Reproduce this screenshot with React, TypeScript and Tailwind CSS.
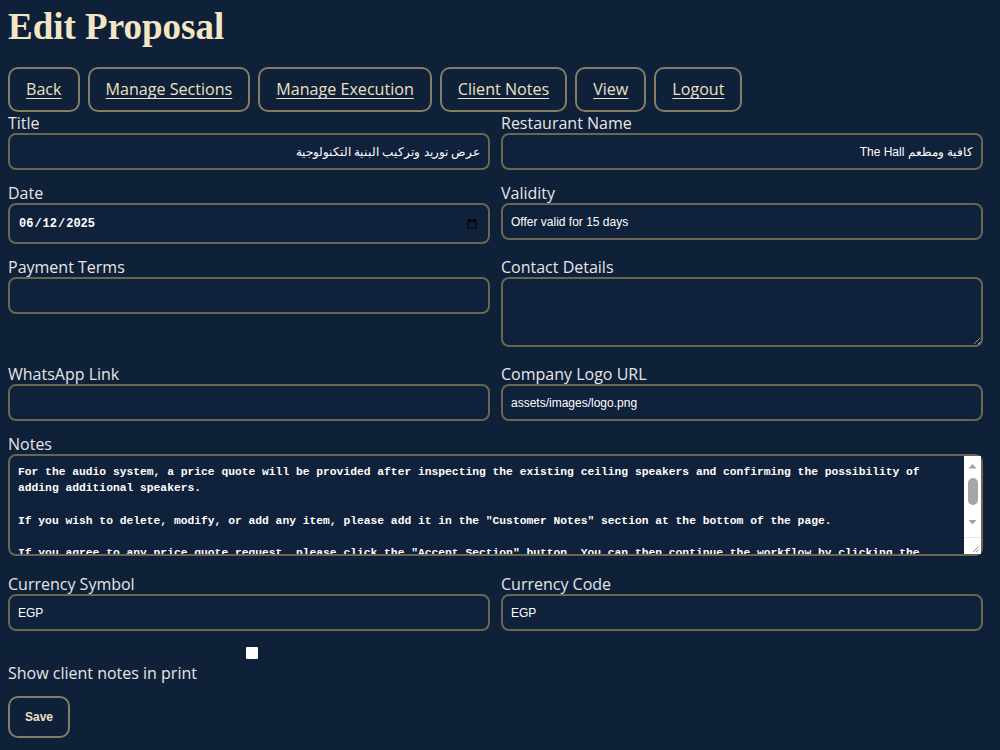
import { useState } from "react";

const NOTES = `For the audio system, a price quote will be provided after inspecting the existing ceiling speakers and confirming the possibility of adding additional speakers.

If you wish to delete, modify, or add any item, please add it in the "Customer Notes" section at the bottom of the page.

If you agree to any price quote request, please click the "Accept Section" button. You can then continue the workflow by clicking the "Manage Execution" button to follow up on delivery and installation.

For any questions, please contact us on WhatsApp.`;

const navLinks = ["Back", "Manage Sections", "Manage Execution", "Client Notes", "View", "Logout"];

const labelCls = "block h-5 text-[16px] leading-5 text-[#e6e6e6] [font-family:'Open_Sans',sans-serif]";
const boxCls =
  "block w-full rounded-[8px] border-2 border-[#6b6653] bg-[#10213b] px-[8px] text-white outline-none";
const sansText = "text-[12px] [font-family:'Liberation_Sans',Arial,sans-serif]";

function Field({
  label,
  value,
  dir,
  type = "text",
}: {
  label: string;
  value: string;
  dir?: "rtl" | "ltr";
  type?: string;
}) {
  const [v, setV] = useState(value);
  const isDate = type === "date";
  return (
    <div className="mb-[13px]">
      <label className={labelCls}>{label}</label>
      <input
        type={type}
        dir={dir}
        value={v}
        onChange={(e) => setV(e.target.value)}
        className={
          isDate
            ? `${boxCls} h-[41px] text-[12px] font-bold [color-scheme:light] [font-family:'Liberation_Mono',monospace]`
            : `${boxCls} h-[37px] ${sansText}`
        }
      />
    </div>
  );
}

// light scroll bar drawn beside the notes text
function ScrollBar() {
  return (
    <div className="pointer-events-none absolute bottom-[2px] right-[2px] top-[2px] flex w-[17px] flex-col bg-white">
      <svg width="17" height="18" viewBox="0 0 17 18">
        <path d="M4.5 12.5 L8.5 8 L12.5 12.5 Z" fill="#a0a0a0" />
      </svg>
      <div className="mx-auto mt-[4px] h-[27px] w-[10px] rounded-full bg-[#a6a6a6]" />
      <svg className="mt-[9px]" width="17" height="18" viewBox="0 0 17 18">
        <path d="M4.5 6 L8.5 10.5 L12.5 6 Z" fill="#a0a0a0" />
      </svg>
      <div className="flex-1" />
      <svg className="border-t border-[#e4e4e4]" width="17" height="17" viewBox="0 0 17 17">
        <line x1="9" y1="15" x2="15" y2="9" stroke="#8a8a8a" />
        <line x1="12" y1="15" x2="15" y2="12" stroke="#8a8a8a" />
      </svg>
    </div>
  );
}

export default function App() {
  const [showNotes, setShowNotes] = useState(false);
  const [notes, setNotes] = useState(NOTES);
  const [contact, setContact] = useState("");

  return (
    <div className="min-h-[750px] bg-[#0f2039] pl-[8px] pr-[17px] pt-[4px]">
      <h1 className="text-[37px] leading-[46px] font-bold text-[#f3e6c4] [font-family:'Liberation_Serif','DejaVu_Serif',serif]">
        Edit Proposal
      </h1>

      {/* top navigation */}
      <div className="mt-[17px] flex gap-[8px]">
        {navLinks.map((l) => (
          <a
            key={l}
            href="#"
            className="flex h-[45px] items-center rounded-[10px] border-2 border-[#857c63] px-[16px] text-[16.1px] text-[#ece0c2] underline underline-offset-[3px] [font-family:'Open_Sans',sans-serif]"
          >
            {l}
          </a>
        ))}
      </div>

      <form className="mt-[1px] grid grid-cols-2 gap-x-[11px]" onSubmit={(e) => e.preventDefault()}>
        <Field label="Title" value="عرض توريد وتركيب البنية التكنولوجية" dir="rtl" />
        <Field label="Restaurant Name" value="كافية ومطعم The Hall" dir="rtl" />
        <Field label="Date" value="2025-06-12" type="date" />
        <Field label="Validity" value="Offer valid for 15 days" />
        <Field label="Payment Terms" value="" />
        <div className="mb-[17px]">
          <label className={labelCls}>Contact Details</label>
          <textarea
            value={contact}
            onChange={(e) => setContact(e.target.value)}
            className={`${boxCls} h-[70px] ${sansText}`}
          />
        </div>
        <Field label="WhatsApp Link" value="" />
        <Field label="Company Logo URL" value="assets/images/logo.png" />

        <div className="col-span-2 mb-[18px]">
          <label className={labelCls}>Notes</label>
          <div className="relative">
            <textarea
              value={notes}
              onChange={(e) => setNotes(e.target.value)}
              className={`${boxCls} h-[102px] resize-none overflow-hidden pr-[25px] pt-[8px] text-[11.3px] leading-[16.3px] font-bold [font-family:'Liberation_Mono',monospace]`}
            />
            <ScrollBar />
          </div>
        </div>

        <Field label="Currency Symbol" value="EGP" />
        <Field label="Currency Code" value="EGP" />

        <div className="col-span-2 mt-[3px] w-[487px]">
          <div className="flex justify-center">
            <input
              type="checkbox"
              checked={showNotes}
              onChange={(e) => setShowNotes(e.target.checked)}
              className="h-[12px] w-[12px] appearance-none rounded-[1px] bg-white"
            />
          </div>
          <label className="mt-[4px] block h-5 text-[16px] leading-5 text-[#e6e6e6] [font-family:'Open_Sans',sans-serif]">
            Show client notes in print
          </label>
        </div>

        <div className="col-span-2 mt-[13px]">
          <button
            type="submit"
            className="h-[42px] w-[62px] rounded-[10px] border-2 border-[#857c63] text-[12px] font-bold text-[#ece0c2] [font-family:'Liberation_Sans',Arial,sans-serif]"
          >
            Save
          </button>
        </div>
      </form>
    </div>
  );
}
